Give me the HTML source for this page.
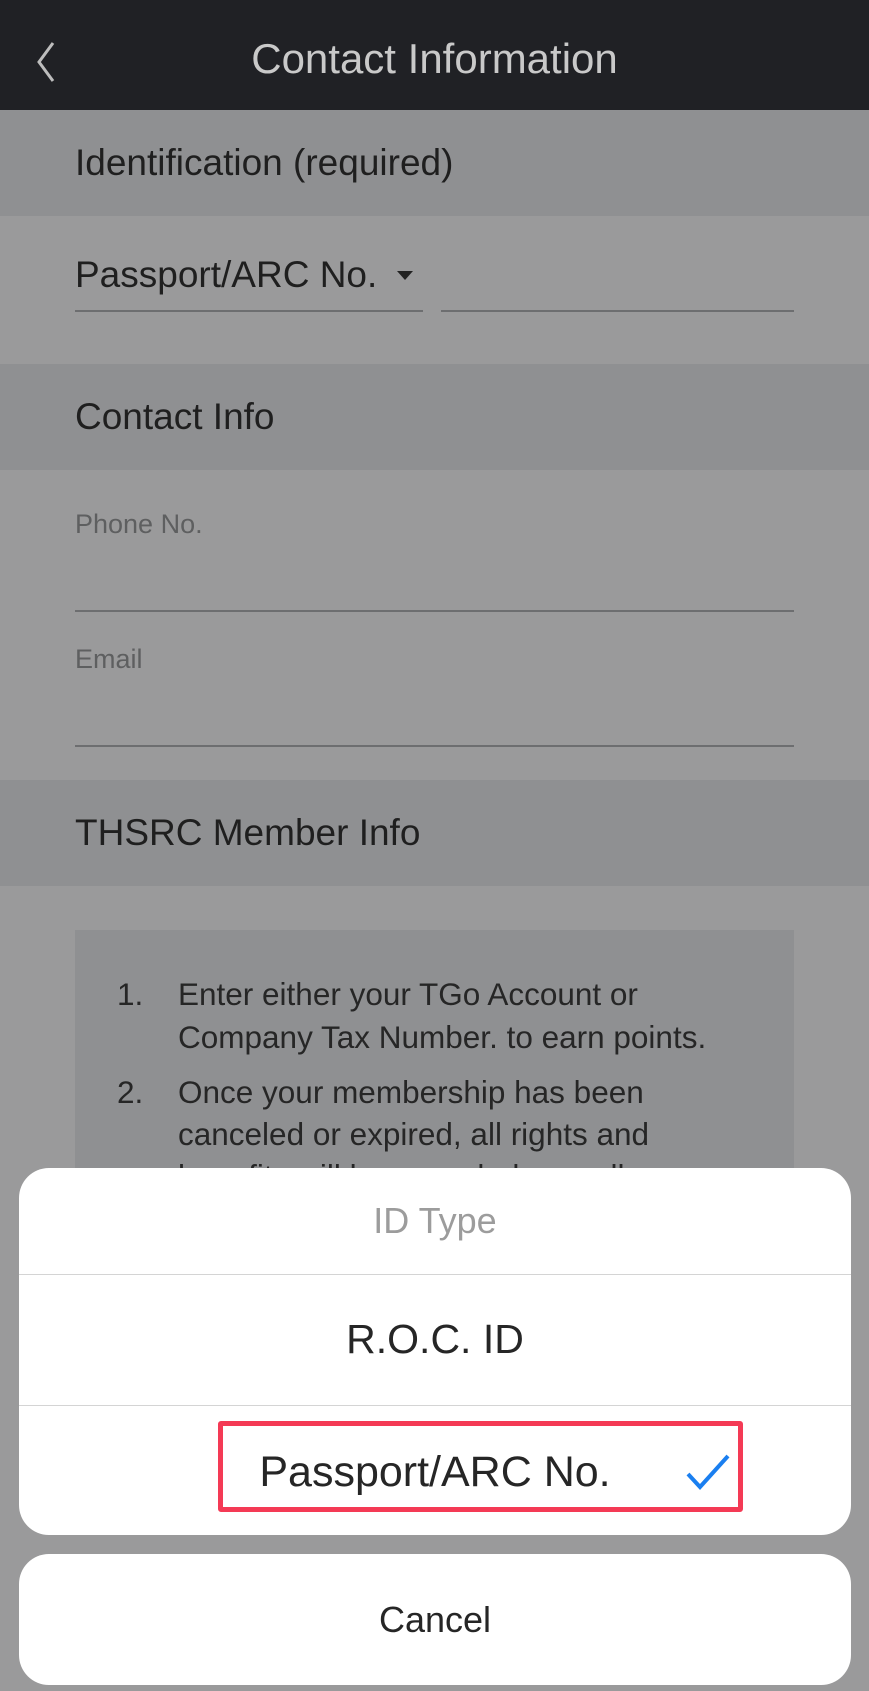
<!DOCTYPE html>
<html><head><meta charset="utf-8"><style>
*{margin:0;padding:0;box-sizing:border-box}
html,body{width:869px;height:1691px;overflow:hidden;background:#9a9a9b;font-family:"Liberation Sans",sans-serif}
.a{position:absolute;white-space:nowrap}
.band{position:absolute;left:0;width:869px;height:106px;background:#8f9092}
.t{color:#1f1f1f;font-size:37px}
.line{position:absolute;height:2px;background:#6d6e70}
.lbl{color:#5e5f60;font-size:27px}
.li{color:#262626;font-size:31.5px}
</style></head><body>
<div class="a" style="left:0;top:0;width:869px;height:110px;background:#202125"></div>
<svg class="a" style="left:34px;top:40px" width="24" height="44" viewBox="0 0 24 44"><path d="M19 3 L5 22 L19 41" fill="none" stroke="#bdbdbd" stroke-width="3"/></svg>
<div class="a" style="left:0;width:869px;top:35px;text-align:center;color:#c9c9c9;font-size:42px">Contact Information</div>

<div class="band" style="top:110px"></div>
<div class="a t" style="left:75px;top:142px">Identification (required)</div>
<div class="a t" style="left:75px;top:254px">Passport/ARC No.</div>
<svg class="a" style="left:397px;top:271px" width="16" height="10"><path d="M0 0H16L8 9Z" fill="#222"/></svg>
<div class="line" style="left:75px;width:348px;top:310px"></div>
<div class="line" style="left:441px;width:353px;top:310px"></div>

<div class="band" style="top:364px"></div>
<div class="a t" style="left:75px;top:396px">Contact Info</div>
<div class="a lbl" style="left:75px;top:509px">Phone No.</div>
<div class="line" style="left:75px;width:719px;top:610px"></div>
<div class="a lbl" style="left:75px;top:644px">Email</div>
<div class="line" style="left:75px;width:719px;top:745px"></div>

<div class="band" style="top:780px"></div>
<div class="a t" style="left:75px;top:812px">THSRC Member Info</div>

<div class="a" style="left:75px;top:930px;width:719px;height:300px;background:#8f9092"></div>
<div class="a li" style="left:117px;top:976px">1.</div>
<div class="a li" style="left:178px;top:976px">Enter either your TGo Account or</div>
<div class="a li" style="left:178px;top:1019px">Company Tax Number. to earn points.</div>
<div class="a li" style="left:117px;top:1074px">2.</div>
<div class="a li" style="left:178px;top:1074px">Once your membership has been</div>
<div class="a li" style="left:178px;top:1116px">canceled or expired, all rights and</div>
<div class="a li" style="left:178px;top:1158px">benefits will be canceled as well.</div>

<div class="a" style="left:19px;top:1168px;width:832px;height:367px;background:#fff;border-radius:30px;overflow:hidden">
 <div class="a" style="left:0;width:832px;top:32px;text-align:center;color:#9c9c9c;font-size:36px">ID Type</div>
 <div class="a" style="left:0;width:832px;top:106px;height:1px;background:#d4d4d4"></div>
 <div class="a" style="left:0;width:832px;top:148px;text-align:center;color:#262626;font-size:41px">R.O.C. ID</div>
 <div class="a" style="left:0;width:832px;top:237px;height:1px;background:#d4d4d4"></div>
 <div class="a" style="left:199px;top:253px;width:525px;height:91px;border:5px solid #f43a55;border-radius:3px"></div>
 <div class="a" style="left:0;width:832px;top:280px;text-align:center;color:#262626;font-size:43px">Passport/ARC No.</div>
 <svg class="a" style="left:666px;top:286px" width="46" height="36" viewBox="0 0 46 36"><path d="M3 20 L15 33 L43 2" fill="none" stroke="#1a7ff0" stroke-width="4"/></svg>
</div>

<div class="a" style="left:19px;top:1554px;width:832px;height:131px;background:#fff;border-radius:30px"></div>
<div class="a" style="left:19px;width:832px;top:1599px;text-align:center;color:#262626;font-size:36px">Cancel</div>
</body></html>
